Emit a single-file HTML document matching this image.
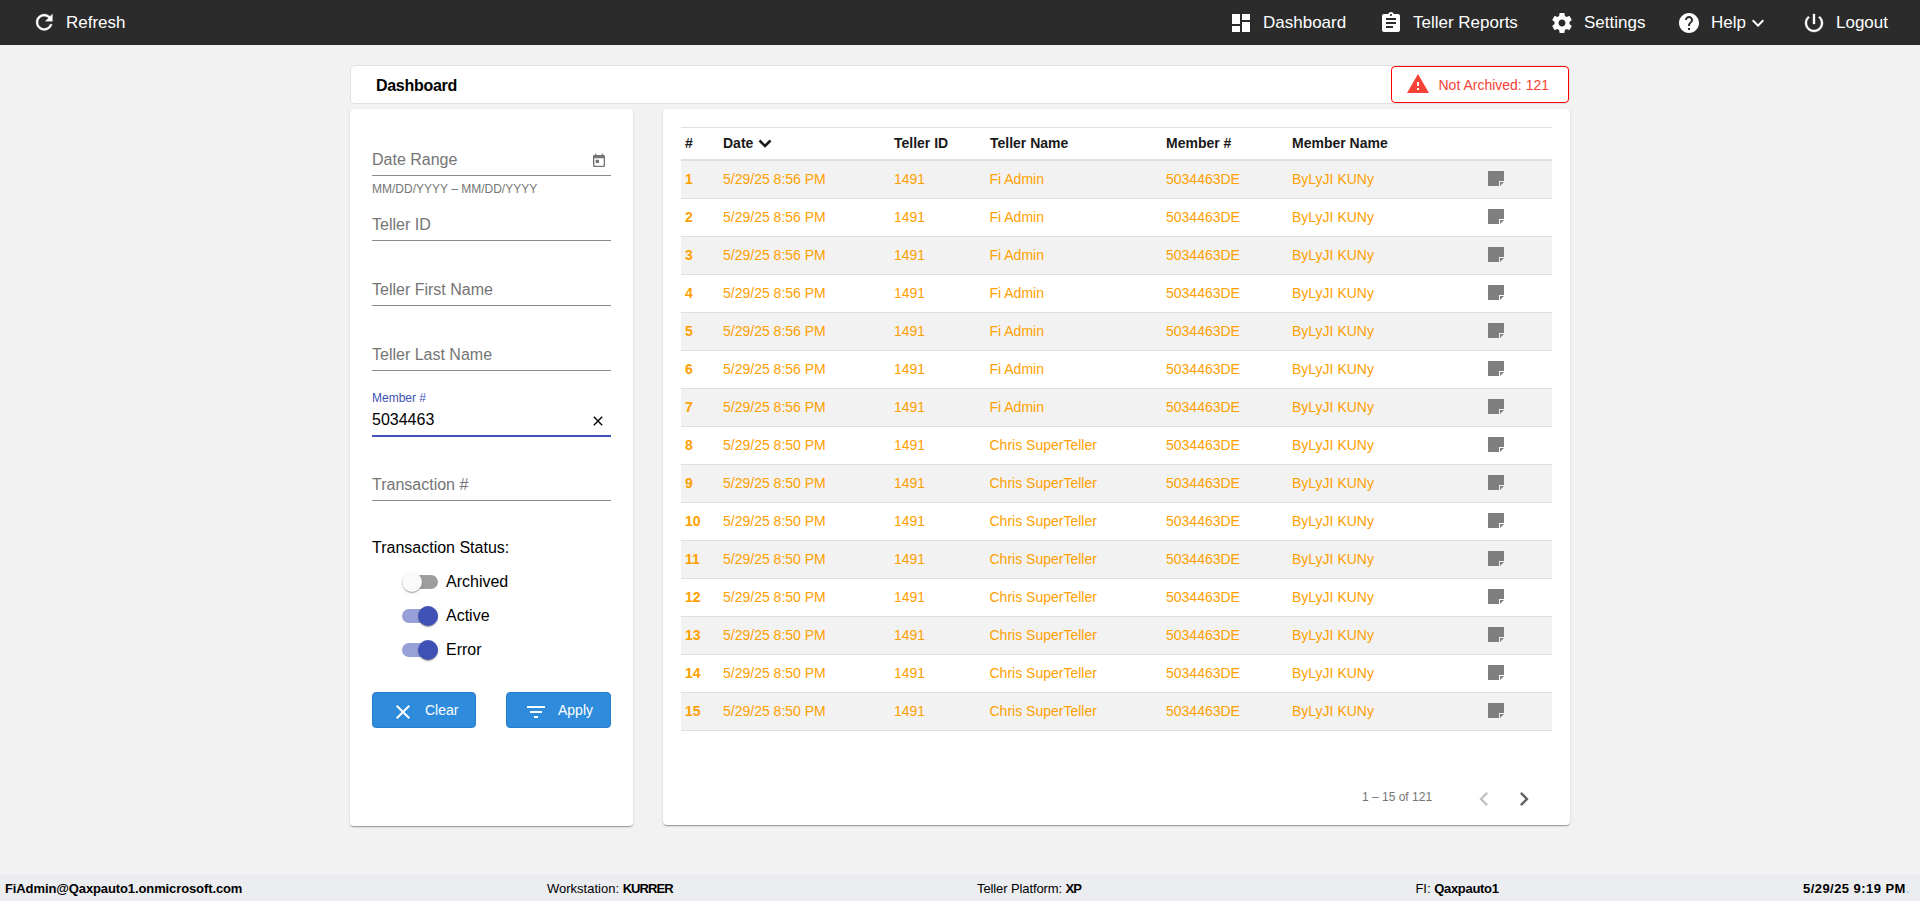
<!DOCTYPE html>
<html><head><meta charset="utf-8"><style>
*{box-sizing:border-box}
html,body{margin:0;padding:0}
body{width:1920px;height:901px;overflow:hidden;background:#f2f2f2;font-family:"Liberation Sans",sans-serif;position:relative;color:#000}
.abs,.t,.ic{position:absolute}
.t{white-space:nowrap}
#nav{left:0;top:0;width:1920px;height:45px;background:#2b2b2b;color:#fff}
#hdr{left:350px;top:65px;width:1220px;height:39px;background:#fff;border:1px solid #e0e0e0;border-radius:5px}
#na{left:1391px;top:66px;width:178px;height:37px;border:1.5px solid #ff0000;border-radius:4px;background:#fff}
.card{background:#fff;border-radius:4px;box-shadow:0 2px 1px -1px rgba(0,0,0,.2),0 1px 1px 0 rgba(0,0,0,.14),0 1px 3px 0 rgba(0,0,0,.12)}
.ul{position:absolute;left:372px;width:239px;height:1px;background:#8c8c8c}
.ph{color:#7a7a7a}
#foot{left:0;top:875px;width:1920px;height:26px;background:#ecedf0}
.row{position:absolute;left:681px;width:871px;height:38px;border-bottom:1px solid #dcdfe3}
.row.g{background:#f2f2f2}
.o{color:#ffa000}
.trk{position:absolute;width:36px;height:14px;border-radius:7px}
.thm{position:absolute;width:20px;height:20px;border-radius:50%;box-shadow:0 2px 1px -1px rgba(0,0,0,.2),0 1px 1px 0 rgba(0,0,0,.14),0 1px 3px 0 rgba(0,0,0,.12)}
.btn{position:absolute;top:692px;height:36px;background:#2f8bdb;border-radius:4px;border:1px solid #2a7dc8}
</style></head><body>
<div id="nav" class="abs"></div>
<svg class="ic" style="left:31.6px;top:10.4px" width="24.5" height="24.5" viewBox="0 0 24 24"><path stroke="#fff" stroke-width="0.3" fill="#fff" d="M17.65 6.35C16.2 4.9 14.21 4 12 4c-4.42 0-7.99 3.58-7.99 8s3.57 8 7.99 8c3.730 0 6.84-2.55 7.73-6h-2.08c-.82 2.33-3.04 4-5.65 4-3.31 0-6-2.690-6-6s2.69-6 6-6c1.66 0 3.14.69 4.22 1.78L13 11h7V4l-2.35 2.35z"/></svg>
<div class="t" style="left:66px;top:14px;font-size:17px;line-height:17px;color:#fff">Refresh</div>
<div class="t" style="left:1263px;top:14px;font-size:17px;line-height:17px;color:#fff">Dashboard</div>
<div class="t" style="left:1413px;top:14px;font-size:17px;line-height:17px;color:#fff">Teller Reports</div>
<div class="t" style="left:1584px;top:14px;font-size:17px;line-height:17px;color:#fff">Settings</div>
<div class="t" style="left:1711px;top:14px;font-size:17px;line-height:17px;color:#fff">Help</div>
<div class="t" style="left:1836px;top:14px;font-size:17px;line-height:17px;color:#fff">Logout</div>
<svg class="ic" style="left:1229px;top:11px" width="24" height="24" viewBox="0 0 24 24"><path fill="#fff" d="M3 13h8V3H3v10zm0 8h8v-6H3v6zm10 0h8V11h-8v10zm0-18v6h8V3h-8z"/></svg>
<svg class="ic" style="left:1378.5px;top:11px" width="24" height="24" viewBox="0 0 24 24"><path fill="#fff" d="M19 3h-4.18C14.4 1.84 13.3 1 12 1c-1.3 0-2.4.84-2.82 2H5c-1.1 0-2 .9-2 2v14c0 1.1.9 2 2 2h14c1.1 0 2-.9 2-2V5c0-1.1-.9-2-2-2zm-7 0c.55 0 1 .45 1 1s-.45 1-1 1-1-.45-1-1 .45-1 1-1zm2 14H7v-2h7v2zm3-4H7v-2h10v2zm0-4H7V7h10v2z"/></svg>
<svg class="ic" style="left:1549.9px;top:10.8px" width="24" height="24" viewBox="0 0 24 24"><path fill="#fff" d="M19.43 12.98c.04-.32.07-.64.07-.98s-.03-.66-.07-.98l2.11-1.65c.19-.15.24-.42.12-.64l-2-3.46c-.12-.22-.39-.3-.61-.22l-2.49 1c-.52-.4-1.08-.73-1.69-.98l-.38-2.65C14.46 2.18 14.25 2 14 2h-4c-.25 0-.46.18-.49.42l-.38 2.65c-.61.25-1.17.59-1.690.98l-2.49-1c-.23-.09-.49 0-.61.22l-2 3.46c-.13.22-.07.49.12.64l2.11 1.65c-.04.32-.07.65-.07.98s.03.66.07.98l-2.11 1.65c-.19.15-.24.42-.12.64l2 3.46c.12.22.39.3.61.22l2.49-1c.52.4 1.08.73 1.69.98l.38 2.65c.03.24.24.42.49.42h4c.25 0 .46-.18.49-.42l.38-2.65c.61-.25 1.17-.59 1.69-.98l2.49 1c.23.09.49 0 .61-.22l2-3.46c.12-.22.07-.49-.12-.64l-2.11-1.65zM12 15.5c-1.93 0-3.5-1.57-3.5-3.5s1.57-3.5 3.5-3.5 3.5 1.57 3.5 3.5-1.57 3.5-3.5 3.5z"/></svg>
<svg class="ic" style="left:1677px;top:11px" width="24" height="24" viewBox="0 0 24 24"><path fill="#fff" d="M12 2C6.48 2 2 6.48 2 12s4.48 10 10 10 10-4.48 10-10S17.52 2 12 2zm1 17h-2v-2h2v2zm2.07-7.75l-.9.92C13.45 12.9 13 13.5 13 15h-2v-.5c0-1.1.45-2.1 1.17-2.83l1.24-1.26c.37-.36.59-.86.59-1.41 0-1.1-.9-2-2-2s-2 .9-2 2H8c0-2.21 1.79-4 4-4s4 1.79 4 4c0 .88-.36 1.68-.93 2.25z"/></svg>
<svg class="ic" style="left:1745.8px;top:11.3px" width="24" height="24" viewBox="0 0 24 24"><path fill="#fff" d="M16.59 8.59L12 13.17 7.41 8.59 6 10l6 6 6-6z"/></svg>
<svg class="ic" style="left:1802.2px;top:11px" width="24" height="24" viewBox="0 0 24 24"><path stroke="#fff" stroke-width="0.35" fill="#fff" d="M13 3h-2v10h2V3zm4.83 2.17l-1.42 1.42C17.99 7.86 19 9.81 19 12c0 3.87-3.13 7-7 7s-7-3.13-7-7c0-2.19 1.01-4.14 2.58-5.42L6.17 5.170C4.23 6.82 3 9.26 3 12c0 4.97 4.03 9 9 9s9-4.03 9-9c0-2.74-1.23-5.18-3.17-6.83z"/></svg>
<div id="hdr" class="abs"></div>
<div class="t" style="left:376px;top:78px;font-size:16px;line-height:16px;font-weight:700;letter-spacing:-0.29px">Dashboard</div>
<div id="na" class="abs"></div>
<svg class="ic" style="left:1406px;top:72.4px" width="24" height="24" viewBox="0 0 24 24"><path fill="#f44336" d="M1 21h22L12 2 1 21zm12-3h-2v-2h2v2zm0-4h-2v-4h2v4z"/></svg>
<div class="t" style="left:1438.5px;top:78px;font-size:14px;line-height:14px;color:#f44336">Not Archived: 121</div>
<div class="abs card" style="left:350px;top:109px;width:283px;height:717px"></div>
<div class="t" style="left:372px;top:152px;font-size:16px;line-height:16px;color:#757575">Date Range</div>
<div class="ul" style="top:175px"></div>
<div class="t" style="left:372px;top:217px;font-size:16px;line-height:16px;color:#757575">Teller ID</div>
<div class="ul" style="top:240px"></div>
<div class="t" style="left:372px;top:282px;font-size:16px;line-height:16px;color:#757575">Teller First Name</div>
<div class="ul" style="top:305px"></div>
<div class="t" style="left:372px;top:347px;font-size:16px;line-height:16px;color:#757575">Teller Last Name</div>
<div class="ul" style="top:370px"></div>
<div class="t" style="left:372px;top:477px;font-size:16px;line-height:16px;color:#757575">Transaction #</div>
<div class="ul" style="top:500px"></div>
<svg class="ic" style="left:591px;top:153px" width="16" height="16" viewBox="0 0 24 24"><path fill="#757575" d="M19 3h-1V1h-2v2H8V1H6v2H5c-1.11 0-1.99.9-1.99 2L3 19c0 1.1.89 2 2 2h14c1.1 0 2-.9 2-2V5c0-1.1-.9-2-2-2zm0 16H5V8h14v11zM7 10h5v5H7z"/></svg>
<div class="t" style="left:372px;top:183px;font-size:12px;line-height:12px;color:#757575">MM/DD/YYYY – MM/DD/YYYY</div>
<div class="t" style="left:372px;top:392px;font-size:12px;line-height:12px;color:#3f51b5">Member #</div>
<div class="t" style="left:372px;top:412px;font-size:16px;line-height:16px;color:#000">5034463</div>
<svg class="ic" style="left:590.3px;top:413.3px" width="16" height="16" viewBox="0 0 24 24"><path fill="#000" d="M19 6.41L17.59 5 12 10.59 6.41 5 5 6.41 10.59 12 5 17.590 6.41 19 12 13.41 17.59 19 19 17.59 13.41 12z"/></svg>
<div class="ul" style="top:435px;height:2px;background:#3f51b5"></div>
<div class="t" style="left:372px;top:540px;font-size:16px;line-height:16px;">Transaction Status:</div>
<div class="trk" style="left:402px;top:575px;background:rgba(0,0,0,.38)"></div>
<div class="thm" style="left:402px;top:572px;background:#fafafa"></div>
<div class="t" style="left:446px;top:574px;font-size:16px;line-height:16px;">Archived</div>
<div class="trk" style="left:402px;top:609px;background:rgba(63,81,181,.54)"></div>
<div class="thm" style="left:418px;top:606px;background:#3f51b5"></div>
<div class="t" style="left:446px;top:608px;font-size:16px;line-height:16px;">Active</div>
<div class="trk" style="left:402px;top:643px;background:rgba(63,81,181,.54)"></div>
<div class="thm" style="left:418px;top:640px;background:#3f51b5"></div>
<div class="t" style="left:446px;top:642px;font-size:16px;line-height:16px;">Error</div>
<div class="btn" style="left:372px;width:104px"></div>
<svg class="ic" style="left:391px;top:699.5px" width="24" height="24" viewBox="0 0 24 24"><path fill="#fff" d="M19 6.41L17.59 5 12 10.59 6.41 5 5 6.41 10.59 12 5 17.590 6.41 19 12 13.41 17.59 19 19 17.59 13.41 12z"/></svg>
<div class="t" style="left:425px;top:703px;font-size:14px;line-height:14px;color:#fff">Clear</div>
<div class="btn" style="left:506px;width:105px"></div>
<svg class="ic" style="left:524px;top:699.5px" width="24" height="24" viewBox="0 0 24 24"><path fill="#fff" d="M10 18h4v-2h-4v2zM3 6v2h18V6H3zm3 7h12v-2H6v2z"/></svg>
<div class="t" style="left:558px;top:703px;font-size:14px;line-height:14px;color:#fff">Apply</div>
<div class="abs card" style="left:663px;top:109px;width:907px;height:716px"></div>
<div class="abs" style="left:681px;top:127px;width:871px;height:1px;background:#dcdfe3"></div>
<div class="abs" style="left:681px;top:159px;width:871px;height:2px;background:#dcdfe3"></div>
<div class="t" style="left:685px;top:136px;font-size:14px;line-height:14px;font-weight:700;color:#1a1a1a">#</div>
<div class="t" style="left:723px;top:136px;font-size:14px;line-height:14px;font-weight:700;color:#1a1a1a">Date</div>
<div class="t" style="left:894px;top:136px;font-size:14px;line-height:14px;font-weight:700;color:#1a1a1a">Teller ID</div>
<div class="t" style="left:990px;top:136px;font-size:14px;line-height:14px;font-weight:700;color:#1a1a1a">Teller Name</div>
<div class="t" style="left:1166px;top:136px;font-size:14px;line-height:14px;font-weight:700;color:#1a1a1a">Member #</div>
<div class="t" style="left:1292px;top:136px;font-size:14px;line-height:14px;font-weight:700;color:#1a1a1a">Member Name</div>
<svg class="ic" style="left:756.5px;top:137.3px" width="16" height="12" viewBox="0 0 16 12"><path d="M2.5 3.5L8 9l5.5-5.5" fill="none" stroke="#1a1a1a" stroke-width="2.6"/></svg>
<div class="row g" style="top:161px"></div>
<div class="t" style="left:685px;top:172px;font-size:14px;line-height:14px;font-weight:700;color:#ffa000">1</div>
<div class="t" style="left:723px;top:172px;font-size:14px;line-height:14px;color:#ffa000">5/29/25 8:56 PM</div>
<div class="t" style="left:894px;top:172px;font-size:14px;line-height:14px;color:#ffa000">1491</div>
<div class="t" style="left:989.5px;top:172px;font-size:14px;line-height:14px;color:#ffa000">Fi Admin</div>
<div class="t" style="left:1166px;top:172px;font-size:14px;line-height:14px;color:#ffa000">5034463DE</div>
<div class="t" style="left:1292px;top:172px;font-size:14px;line-height:14px;color:#ffa000">ByLyJI KUNy</div>
<svg class="ic" style="left:1488px;top:171px" width="16" height="15" viewBox="0 0 16 15"><path fill="#7f7f7f" d="M0 0H16V10H11V15H0Z"/><path fill="#7f7f7f" d="M12 11H16L12 15Z"/></svg>
<div class="row" style="top:199px"></div>
<div class="t" style="left:685px;top:210px;font-size:14px;line-height:14px;font-weight:700;color:#ffa000">2</div>
<div class="t" style="left:723px;top:210px;font-size:14px;line-height:14px;color:#ffa000">5/29/25 8:56 PM</div>
<div class="t" style="left:894px;top:210px;font-size:14px;line-height:14px;color:#ffa000">1491</div>
<div class="t" style="left:989.5px;top:210px;font-size:14px;line-height:14px;color:#ffa000">Fi Admin</div>
<div class="t" style="left:1166px;top:210px;font-size:14px;line-height:14px;color:#ffa000">5034463DE</div>
<div class="t" style="left:1292px;top:210px;font-size:14px;line-height:14px;color:#ffa000">ByLyJI KUNy</div>
<svg class="ic" style="left:1488px;top:209px" width="16" height="15" viewBox="0 0 16 15"><path fill="#7f7f7f" d="M0 0H16V10H11V15H0Z"/><path fill="#7f7f7f" d="M12 11H16L12 15Z"/></svg>
<div class="row g" style="top:237px"></div>
<div class="t" style="left:685px;top:248px;font-size:14px;line-height:14px;font-weight:700;color:#ffa000">3</div>
<div class="t" style="left:723px;top:248px;font-size:14px;line-height:14px;color:#ffa000">5/29/25 8:56 PM</div>
<div class="t" style="left:894px;top:248px;font-size:14px;line-height:14px;color:#ffa000">1491</div>
<div class="t" style="left:989.5px;top:248px;font-size:14px;line-height:14px;color:#ffa000">Fi Admin</div>
<div class="t" style="left:1166px;top:248px;font-size:14px;line-height:14px;color:#ffa000">5034463DE</div>
<div class="t" style="left:1292px;top:248px;font-size:14px;line-height:14px;color:#ffa000">ByLyJI KUNy</div>
<svg class="ic" style="left:1488px;top:247px" width="16" height="15" viewBox="0 0 16 15"><path fill="#7f7f7f" d="M0 0H16V10H11V15H0Z"/><path fill="#7f7f7f" d="M12 11H16L12 15Z"/></svg>
<div class="row" style="top:275px"></div>
<div class="t" style="left:685px;top:286px;font-size:14px;line-height:14px;font-weight:700;color:#ffa000">4</div>
<div class="t" style="left:723px;top:286px;font-size:14px;line-height:14px;color:#ffa000">5/29/25 8:56 PM</div>
<div class="t" style="left:894px;top:286px;font-size:14px;line-height:14px;color:#ffa000">1491</div>
<div class="t" style="left:989.5px;top:286px;font-size:14px;line-height:14px;color:#ffa000">Fi Admin</div>
<div class="t" style="left:1166px;top:286px;font-size:14px;line-height:14px;color:#ffa000">5034463DE</div>
<div class="t" style="left:1292px;top:286px;font-size:14px;line-height:14px;color:#ffa000">ByLyJI KUNy</div>
<svg class="ic" style="left:1488px;top:285px" width="16" height="15" viewBox="0 0 16 15"><path fill="#7f7f7f" d="M0 0H16V10H11V15H0Z"/><path fill="#7f7f7f" d="M12 11H16L12 15Z"/></svg>
<div class="row g" style="top:313px"></div>
<div class="t" style="left:685px;top:324px;font-size:14px;line-height:14px;font-weight:700;color:#ffa000">5</div>
<div class="t" style="left:723px;top:324px;font-size:14px;line-height:14px;color:#ffa000">5/29/25 8:56 PM</div>
<div class="t" style="left:894px;top:324px;font-size:14px;line-height:14px;color:#ffa000">1491</div>
<div class="t" style="left:989.5px;top:324px;font-size:14px;line-height:14px;color:#ffa000">Fi Admin</div>
<div class="t" style="left:1166px;top:324px;font-size:14px;line-height:14px;color:#ffa000">5034463DE</div>
<div class="t" style="left:1292px;top:324px;font-size:14px;line-height:14px;color:#ffa000">ByLyJI KUNy</div>
<svg class="ic" style="left:1488px;top:323px" width="16" height="15" viewBox="0 0 16 15"><path fill="#7f7f7f" d="M0 0H16V10H11V15H0Z"/><path fill="#7f7f7f" d="M12 11H16L12 15Z"/></svg>
<div class="row" style="top:351px"></div>
<div class="t" style="left:685px;top:362px;font-size:14px;line-height:14px;font-weight:700;color:#ffa000">6</div>
<div class="t" style="left:723px;top:362px;font-size:14px;line-height:14px;color:#ffa000">5/29/25 8:56 PM</div>
<div class="t" style="left:894px;top:362px;font-size:14px;line-height:14px;color:#ffa000">1491</div>
<div class="t" style="left:989.5px;top:362px;font-size:14px;line-height:14px;color:#ffa000">Fi Admin</div>
<div class="t" style="left:1166px;top:362px;font-size:14px;line-height:14px;color:#ffa000">5034463DE</div>
<div class="t" style="left:1292px;top:362px;font-size:14px;line-height:14px;color:#ffa000">ByLyJI KUNy</div>
<svg class="ic" style="left:1488px;top:361px" width="16" height="15" viewBox="0 0 16 15"><path fill="#7f7f7f" d="M0 0H16V10H11V15H0Z"/><path fill="#7f7f7f" d="M12 11H16L12 15Z"/></svg>
<div class="row g" style="top:389px"></div>
<div class="t" style="left:685px;top:400px;font-size:14px;line-height:14px;font-weight:700;color:#ffa000">7</div>
<div class="t" style="left:723px;top:400px;font-size:14px;line-height:14px;color:#ffa000">5/29/25 8:56 PM</div>
<div class="t" style="left:894px;top:400px;font-size:14px;line-height:14px;color:#ffa000">1491</div>
<div class="t" style="left:989.5px;top:400px;font-size:14px;line-height:14px;color:#ffa000">Fi Admin</div>
<div class="t" style="left:1166px;top:400px;font-size:14px;line-height:14px;color:#ffa000">5034463DE</div>
<div class="t" style="left:1292px;top:400px;font-size:14px;line-height:14px;color:#ffa000">ByLyJI KUNy</div>
<svg class="ic" style="left:1488px;top:399px" width="16" height="15" viewBox="0 0 16 15"><path fill="#7f7f7f" d="M0 0H16V10H11V15H0Z"/><path fill="#7f7f7f" d="M12 11H16L12 15Z"/></svg>
<div class="row" style="top:427px"></div>
<div class="t" style="left:685px;top:438px;font-size:14px;line-height:14px;font-weight:700;color:#ffa000">8</div>
<div class="t" style="left:723px;top:438px;font-size:14px;line-height:14px;color:#ffa000">5/29/25 8:50 PM</div>
<div class="t" style="left:894px;top:438px;font-size:14px;line-height:14px;color:#ffa000">1491</div>
<div class="t" style="left:989.5px;top:438px;font-size:14px;line-height:14px;color:#ffa000">Chris SuperTeller</div>
<div class="t" style="left:1166px;top:438px;font-size:14px;line-height:14px;color:#ffa000">5034463DE</div>
<div class="t" style="left:1292px;top:438px;font-size:14px;line-height:14px;color:#ffa000">ByLyJI KUNy</div>
<svg class="ic" style="left:1488px;top:437px" width="16" height="15" viewBox="0 0 16 15"><path fill="#7f7f7f" d="M0 0H16V10H11V15H0Z"/><path fill="#7f7f7f" d="M12 11H16L12 15Z"/></svg>
<div class="row g" style="top:465px"></div>
<div class="t" style="left:685px;top:476px;font-size:14px;line-height:14px;font-weight:700;color:#ffa000">9</div>
<div class="t" style="left:723px;top:476px;font-size:14px;line-height:14px;color:#ffa000">5/29/25 8:50 PM</div>
<div class="t" style="left:894px;top:476px;font-size:14px;line-height:14px;color:#ffa000">1491</div>
<div class="t" style="left:989.5px;top:476px;font-size:14px;line-height:14px;color:#ffa000">Chris SuperTeller</div>
<div class="t" style="left:1166px;top:476px;font-size:14px;line-height:14px;color:#ffa000">5034463DE</div>
<div class="t" style="left:1292px;top:476px;font-size:14px;line-height:14px;color:#ffa000">ByLyJI KUNy</div>
<svg class="ic" style="left:1488px;top:475px" width="16" height="15" viewBox="0 0 16 15"><path fill="#7f7f7f" d="M0 0H16V10H11V15H0Z"/><path fill="#7f7f7f" d="M12 11H16L12 15Z"/></svg>
<div class="row" style="top:503px"></div>
<div class="t" style="left:685px;top:514px;font-size:14px;line-height:14px;font-weight:700;color:#ffa000">10</div>
<div class="t" style="left:723px;top:514px;font-size:14px;line-height:14px;color:#ffa000">5/29/25 8:50 PM</div>
<div class="t" style="left:894px;top:514px;font-size:14px;line-height:14px;color:#ffa000">1491</div>
<div class="t" style="left:989.5px;top:514px;font-size:14px;line-height:14px;color:#ffa000">Chris SuperTeller</div>
<div class="t" style="left:1166px;top:514px;font-size:14px;line-height:14px;color:#ffa000">5034463DE</div>
<div class="t" style="left:1292px;top:514px;font-size:14px;line-height:14px;color:#ffa000">ByLyJI KUNy</div>
<svg class="ic" style="left:1488px;top:513px" width="16" height="15" viewBox="0 0 16 15"><path fill="#7f7f7f" d="M0 0H16V10H11V15H0Z"/><path fill="#7f7f7f" d="M12 11H16L12 15Z"/></svg>
<div class="row g" style="top:541px"></div>
<div class="t" style="left:685px;top:552px;font-size:14px;line-height:14px;font-weight:700;color:#ffa000">11</div>
<div class="t" style="left:723px;top:552px;font-size:14px;line-height:14px;color:#ffa000">5/29/25 8:50 PM</div>
<div class="t" style="left:894px;top:552px;font-size:14px;line-height:14px;color:#ffa000">1491</div>
<div class="t" style="left:989.5px;top:552px;font-size:14px;line-height:14px;color:#ffa000">Chris SuperTeller</div>
<div class="t" style="left:1166px;top:552px;font-size:14px;line-height:14px;color:#ffa000">5034463DE</div>
<div class="t" style="left:1292px;top:552px;font-size:14px;line-height:14px;color:#ffa000">ByLyJI KUNy</div>
<svg class="ic" style="left:1488px;top:551px" width="16" height="15" viewBox="0 0 16 15"><path fill="#7f7f7f" d="M0 0H16V10H11V15H0Z"/><path fill="#7f7f7f" d="M12 11H16L12 15Z"/></svg>
<div class="row" style="top:579px"></div>
<div class="t" style="left:685px;top:590px;font-size:14px;line-height:14px;font-weight:700;color:#ffa000">12</div>
<div class="t" style="left:723px;top:590px;font-size:14px;line-height:14px;color:#ffa000">5/29/25 8:50 PM</div>
<div class="t" style="left:894px;top:590px;font-size:14px;line-height:14px;color:#ffa000">1491</div>
<div class="t" style="left:989.5px;top:590px;font-size:14px;line-height:14px;color:#ffa000">Chris SuperTeller</div>
<div class="t" style="left:1166px;top:590px;font-size:14px;line-height:14px;color:#ffa000">5034463DE</div>
<div class="t" style="left:1292px;top:590px;font-size:14px;line-height:14px;color:#ffa000">ByLyJI KUNy</div>
<svg class="ic" style="left:1488px;top:589px" width="16" height="15" viewBox="0 0 16 15"><path fill="#7f7f7f" d="M0 0H16V10H11V15H0Z"/><path fill="#7f7f7f" d="M12 11H16L12 15Z"/></svg>
<div class="row g" style="top:617px"></div>
<div class="t" style="left:685px;top:628px;font-size:14px;line-height:14px;font-weight:700;color:#ffa000">13</div>
<div class="t" style="left:723px;top:628px;font-size:14px;line-height:14px;color:#ffa000">5/29/25 8:50 PM</div>
<div class="t" style="left:894px;top:628px;font-size:14px;line-height:14px;color:#ffa000">1491</div>
<div class="t" style="left:989.5px;top:628px;font-size:14px;line-height:14px;color:#ffa000">Chris SuperTeller</div>
<div class="t" style="left:1166px;top:628px;font-size:14px;line-height:14px;color:#ffa000">5034463DE</div>
<div class="t" style="left:1292px;top:628px;font-size:14px;line-height:14px;color:#ffa000">ByLyJI KUNy</div>
<svg class="ic" style="left:1488px;top:627px" width="16" height="15" viewBox="0 0 16 15"><path fill="#7f7f7f" d="M0 0H16V10H11V15H0Z"/><path fill="#7f7f7f" d="M12 11H16L12 15Z"/></svg>
<div class="row" style="top:655px"></div>
<div class="t" style="left:685px;top:666px;font-size:14px;line-height:14px;font-weight:700;color:#ffa000">14</div>
<div class="t" style="left:723px;top:666px;font-size:14px;line-height:14px;color:#ffa000">5/29/25 8:50 PM</div>
<div class="t" style="left:894px;top:666px;font-size:14px;line-height:14px;color:#ffa000">1491</div>
<div class="t" style="left:989.5px;top:666px;font-size:14px;line-height:14px;color:#ffa000">Chris SuperTeller</div>
<div class="t" style="left:1166px;top:666px;font-size:14px;line-height:14px;color:#ffa000">5034463DE</div>
<div class="t" style="left:1292px;top:666px;font-size:14px;line-height:14px;color:#ffa000">ByLyJI KUNy</div>
<svg class="ic" style="left:1488px;top:665px" width="16" height="15" viewBox="0 0 16 15"><path fill="#7f7f7f" d="M0 0H16V10H11V15H0Z"/><path fill="#7f7f7f" d="M12 11H16L12 15Z"/></svg>
<div class="row g" style="top:693px"></div>
<div class="t" style="left:685px;top:704px;font-size:14px;line-height:14px;font-weight:700;color:#ffa000">15</div>
<div class="t" style="left:723px;top:704px;font-size:14px;line-height:14px;color:#ffa000">5/29/25 8:50 PM</div>
<div class="t" style="left:894px;top:704px;font-size:14px;line-height:14px;color:#ffa000">1491</div>
<div class="t" style="left:989.5px;top:704px;font-size:14px;line-height:14px;color:#ffa000">Chris SuperTeller</div>
<div class="t" style="left:1166px;top:704px;font-size:14px;line-height:14px;color:#ffa000">5034463DE</div>
<div class="t" style="left:1292px;top:704px;font-size:14px;line-height:14px;color:#ffa000">ByLyJI KUNy</div>
<svg class="ic" style="left:1488px;top:703px" width="16" height="15" viewBox="0 0 16 15"><path fill="#7f7f7f" d="M0 0H16V10H11V15H0Z"/><path fill="#7f7f7f" d="M12 11H16L12 15Z"/></svg>
<div class="t" style="left:1362px;top:791px;font-size:12px;line-height:12px;color:#757575">1 – 15 of 121</div>
<svg class="ic" style="left:1470.35px;top:785px" width="28" height="28" viewBox="0 0 24 24"><path fill="#c2c2c2" d="M15.41 7.41L14 6l-6 6 6 6 1.41-1.410L10.83 12z"/></svg>
<svg class="ic" style="left:1510px;top:785px" width="28" height="28" viewBox="0 0 24 24"><path fill="#616161" d="M10 6L8.59 7.41 13.17 12l-4.58 4.59L10 18l6-6z"/></svg>
<div id="foot" class="abs"></div>
<div class="t" style="left:5px;top:882px;font-size:13px;line-height:13px;font-weight:700;letter-spacing:-0.11px">FiAdmin@Qaxpauto1.onmicrosoft.com</div>
<div class="t" style="left:547px;top:882px;font-size:13px;line-height:13px;">Workstation: <b style="letter-spacing:-0.9px">KURRER</b></div>
<div class="t" style="left:977px;top:882px;font-size:13px;line-height:13px;letter-spacing:-0.1px">Teller Platform: <b style="letter-spacing:-1px">XP</b></div>
<div class="t" style="left:1415.4px;top:882px;font-size:13px;line-height:13px;">FI: <b style="letter-spacing:-0.3px">Qaxpauto1</b></div>
<div class="t" style="left:1803px;top:882px;font-size:13px;line-height:13px;font-weight:700;letter-spacing:0.45px">5/29/25 9:19 PM<span style="color:#b8c8d8">.</span></div>
</body></html>
